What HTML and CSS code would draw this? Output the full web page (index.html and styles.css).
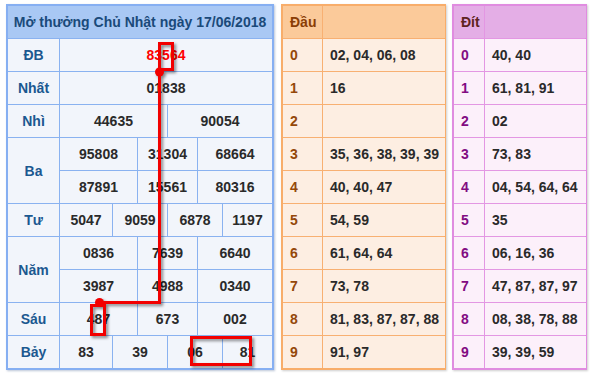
FILE: index.html
```html
<!DOCTYPE html>
<html lang="vi">
<head>
<meta charset="utf-8">
<title>Kết quả xổ số</title>
<link rel="stylesheet" href="styles.css">
</head>
<body>
<div class="page">
  <div class="kq">
    <div class="kq-title">Mở thưởng Chủ Nhật ngày 17/06/2018</div>

    <div class="lbl">ĐB</div>
    <div class="num s6 red">83564</div>

    <div class="lbl">Nhất</div>
    <div class="num s6">01838</div>

    <div class="lbl">Nhì</div>
    <div class="num s3">44635</div>
    <div class="num s3">90054</div>

    <div class="lbl r2">Ba</div>
    <div class="num s2">95808</div>
    <div class="num s2">31304</div>
    <div class="num s2">68664</div>
    <div class="num s2">87891</div>
    <div class="num s2">15561</div>
    <div class="num s2">80316</div>

    <div class="lbl">Tư</div>
    <div class="num s1">5047</div>
    <div class="num s2">9059</div>
    <div class="num s2">6878</div>
    <div class="num s1">1197</div>

    <div class="lbl r2">Năm</div>
    <div class="num s2">0836</div>
    <div class="num s2">7639</div>
    <div class="num s2">6640</div>
    <div class="num s2">3987</div>
    <div class="num s2">4988</div>
    <div class="num s2">0340</div>

    <div class="lbl">Sáu</div>
    <div class="num s2">487</div>
    <div class="num s2">673</div>
    <div class="num s2">002</div>

    <div class="lbl">Bảy</div>
    <div class="num s1">83</div>
    <div class="num s2">39</div>
    <div class="num s2">06</div>
    <div class="num s1">81</div>
  </div>

  <div class="lo dau">
    <div class="lo-h">Đầu</div><div class="lo-h"></div>
    <div class="d">0</div><div class="v">02, 04, 06, 08</div>
    <div class="d">1</div><div class="v">16</div>
    <div class="d">2</div><div class="v"></div>
    <div class="d">3</div><div class="v">35, 36, 38, 39, 39</div>
    <div class="d">4</div><div class="v">40, 40, 47</div>
    <div class="d">5</div><div class="v">54, 59</div>
    <div class="d">6</div><div class="v">61, 64, 64</div>
    <div class="d">7</div><div class="v">73, 78</div>
    <div class="d">8</div><div class="v">81, 83, 87, 87, 88</div>
    <div class="d">9</div><div class="v">91, 97</div>
  </div>

  <div class="lo dit">
    <div class="lo-h">Đít</div><div class="lo-h"></div>
    <div class="d">0</div><div class="v">40, 40</div>
    <div class="d">1</div><div class="v">61, 81, 91</div>
    <div class="d">2</div><div class="v">02</div>
    <div class="d">3</div><div class="v">73, 83</div>
    <div class="d">4</div><div class="v">04, 54, 64, 64</div>
    <div class="d">5</div><div class="v">35</div>
    <div class="d">6</div><div class="v">06, 16, 36</div>
    <div class="d">7</div><div class="v">47, 87, 87, 97</div>
    <div class="d">8</div><div class="v">08, 38, 78, 88</div>
    <div class="d">9</div><div class="v">39, 39, 59</div>
  </div>

  <svg class="marks" width="591" height="374" viewBox="0 0 591 374" aria-hidden="true">
    <g class="mk">
      <rect x="159.5" y="43.5" width="13" height="26" />
      <line x1="159.5" y1="72" x2="159.5" y2="304" />
      <line x1="99" y1="302.5" x2="161" y2="302.5" />
      <rect x="91.5" y="305.5" width="13" height="29" />
      <rect x="191.5" y="337.5" width="59" height="27" />
      <circle cx="159.5" cy="72" r="4.5" />
      <circle cx="99.5" cy="302.5" r="4.5" />
    </g>
  </svg>
</div>
</body>
</html>
```

FILE: styles.css
```css
* { box-sizing: border-box; }
html, body { margin: 0; padding: 0; background: #ffffff; }
body {
  font-family: "Liberation Sans", Arial, sans-serif;
  font-size: 14px;
  font-weight: bold;
}
.page {
  position: relative;
  width: 591px;
  height: 374px;
  display: flex;
  align-items: flex-start;
  padding: 4px 0 0 6px;
}

/* results table */
.kq {
  width: 268px;
  display: grid;
  grid-template-columns: 51px 52px 24px 29px 29px 24px 49px;
  grid-auto-rows: 32px;
  gap: 1px;
  background: #8ab2f0;
  border: 2px solid #86aff2;
  box-shadow: 1px 1px 2px rgba(60, 90, 140, 0.35);
}
.kq-title {
  grid-column: 1 / -1;
  background: #a9c8f4;
  color: #1a4a7a;
  display: flex;
  align-items: center;
  justify-content: center;
}
.kq .lbl, .kq .num {
  background: #f2f5fb;
  display: flex;
  align-items: center;
  justify-content: center;
}
.kq .lbl { color: #1b5890; }
.kq .num { color: #2a2a2a; }
.kq .r2 { grid-row: span 2; }
.kq .s1 { grid-column: span 1; }
.kq .s2 { grid-column: span 2; }
.kq .s3 { grid-column: span 3; }
.kq .s6 { grid-column: span 6; }
.kq .red { color: #ff0000; }

/* loto tables */
.lo {
  display: grid;
  grid-auto-rows: 32px;
  gap: 1px;
  box-shadow: 1px 1px 2px rgba(0, 0, 0, 0.2);
}
.lo > div {
  display: flex;
  align-items: center;
  padding-left: 7px;
  color: #2a2a2a;
}
.dau {
  width: 165px;
  margin-left: 7px;
  grid-template-columns: 39px 122px;
  background: #f8b072;
  border: 2px solid #f8ad6a;
}
.dau .lo-h { background: #fbca9a; color: #8a3e06; }
.dau .d, .dau .v { background: #fdeee2; }
.dau .d { color: #94480a; }

.dit {
  width: 135px;
  margin-left: 6px;
  grid-template-columns: 30px 101px;
  background: #e397e3;
  border: 2px solid #e08ce0;
}
.dit .lo-h { background: #e4aee6; color: #5e2420; }
.dit .d, .dit .v { background: #fcf0fa; }
.dit .d { color: #820c82; }

/* annotation overlay */
.marks {
  position: absolute;
  left: 0;
  top: 0;
  pointer-events: none;
}
.mk {
  filter: drop-shadow(2px 2px 1.5px rgba(0, 0, 0, 0.45));
}
.mk rect, .mk line {
  fill: none;
  stroke: #f20000;
  stroke-width: 3;
}
.mk circle { fill: #f20000; }
```
